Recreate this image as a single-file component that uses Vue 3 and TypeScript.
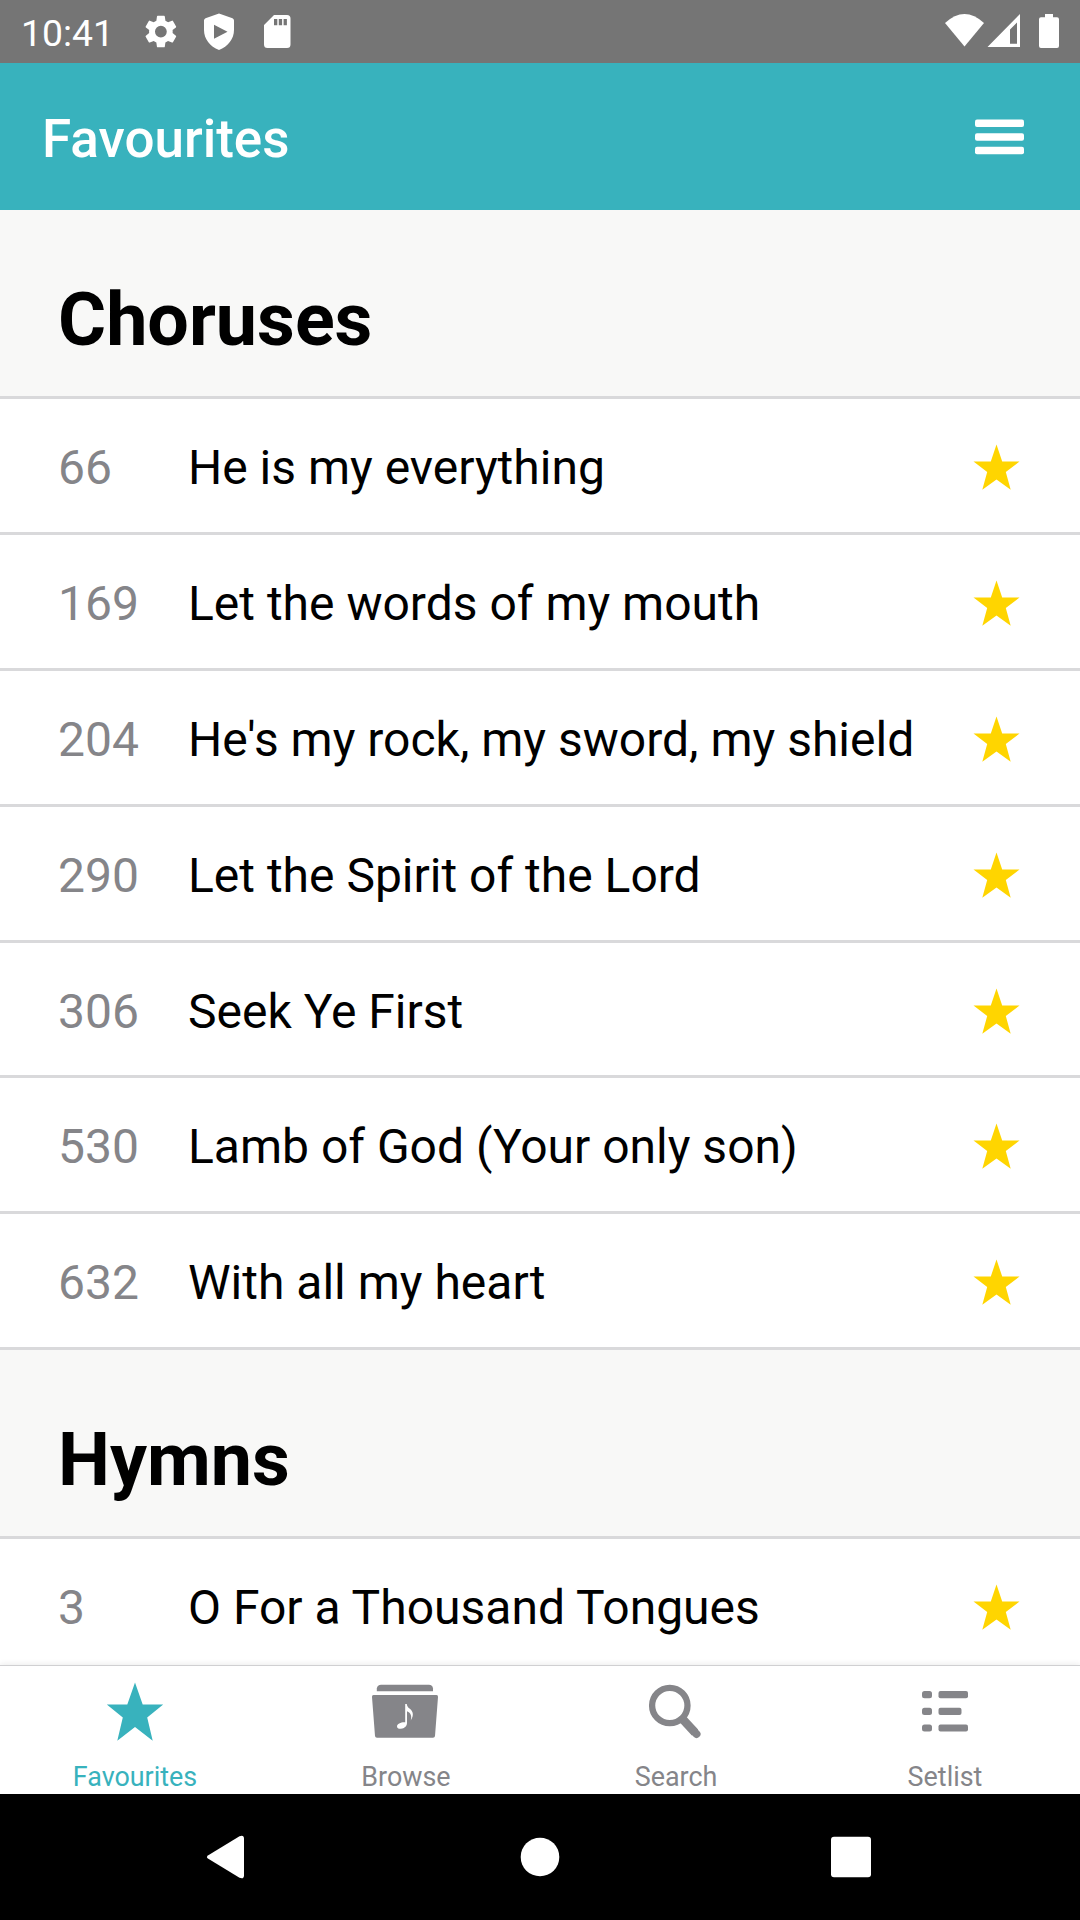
<script setup lang="ts">
interface Song { no: number; title: string }
interface Section { name: string; songs: Song[] }

const sections: Section[] = [
  {
    name: 'Choruses',
    songs: [
      { no: 66, title: 'He is my everything' },
      { no: 169, title: 'Let the words of my mouth' },
      { no: 204, title: "He's my rock, my sword, my shield" },
      { no: 290, title: 'Let the Spirit of the Lord' },
      { no: 306, title: 'Seek Ye First' },
      { no: 530, title: 'Lamb of God (Your only son)' },
      { no: 632, title: 'With all my heart' },
    ],
  },
  { name: 'Hymns', songs: [{ no: 3, title: 'O For a Thousand Tongues' }] },
]
</script>

<template>
  <div class="screen">
    <div class="status">
      <span class="clock">10:41</span>
      <svg class="left-icons" width="160" height="63" viewBox="0 0 160 63" fill="#fff">
        <g transform="translate(1.2 11.9) scale(1.64)">
          <path d="M19.14 12.94c.04-.3.06-.61.06-.94 0-.32-.02-.64-.07-.94l2.03-1.58a.49.49 0 0 0 .12-.61l-1.92-3.32a.49.49 0 0 0-.59-.22l-2.39.96c-.5-.38-1.03-.7-1.62-.94L14.4 2.81a.48.48 0 0 0-.48-.41h-3.84a.47.47 0 0 0-.47.41l-.36 2.54c-.59.24-1.13.57-1.62.94l-2.39-.96a.48.48 0 0 0-.59.22L2.74 8.87c-.12.21-.08.47.12.61l2.03 1.58c-.05.3-.09.63-.09.94s.02.64.07.94l-2.03 1.58a.49.49 0 0 0-.12.61l1.92 3.32c.12.22.37.29.59.22l2.39-.96c.5.38 1.03.7 1.62.94l.36 2.54c.05.24.24.41.48.41h3.84c.24 0 .44-.17.47-.41l.36-2.54c.59-.24 1.13-.56 1.62-.94l2.39.96c.22.08.47 0 .59-.22l1.92-3.32a.48.48 0 0 0-.12-.61l-2.01-1.58zM12 15.6A3.6 3.6 0 1 1 12 8.400a3.600 3.600 0 0 1 0 7.200z" />
        </g>
        <path fill-rule="evenodd" d="M79 13.500 92.500 18.300Q94 19 94 20.500V30C94 39 88 46.500 79 50C70 46.500 64 39 64 30V20.500Q64 19 65.500 18.300zM74 24.800V38.800L87.500 31.800z" />
        <path fill-rule="evenodd" d="M134 15H147Q150.500 15 150.500 18.500V44.500Q150.500 48 147 48H127.500Q124 48 124 44.500V25zM134 19V25.300H137.300V19zM138.800 19V25.300H142.100V19zM143.600 19V25.300H146.900V19z" />
      </svg>
      <svg class="right-icons" width="116" height="63" viewBox="0 0 116 63" fill="#fff">
        <path d="M1 23Q20.500 5 40 23L20.500 46.500z" />
        <path fill-rule="evenodd" d="M76 14V46.900H43.500zM73 22.500 66 29.500V43.800H73z" />
        <path d="M101 14H109V17.300H113Q115 17.300 115 19.300V46Q115 48 113 48H97Q95 48 95 46V19.300Q95 17.300 97 17.300H101z" />
      </svg>
    </div>

    <header class="bar">
      <h1>Favourites</h1>
      <svg width="49" height="36" viewBox="0 0 49 36" fill="#fff">
        <rect y="0.500" width="49" height="7.500" rx="2" />
        <rect y="14.200" width="49" height="7.500" rx="2" />
        <rect y="27.800" width="49" height="7.500" rx="2" />
      </svg>
    </header>

    <main class="list">
      <section v-for="s in sections" :key="s.name">
        <h2>{{ s.name }}</h2>
        <div v-for="song in s.songs" :key="song.no" class="row">
          <span class="no">{{ song.no }}</span>
          <span class="title">{{ song.title }}</span>
          <svg class="star" width="46" height="46" viewBox="0 0 46 46" fill="#ffd500">
            <path d="M23.500 0.400 29.200 17.600H46.500L32.800 28.100 37.700 45.800 23.500 35.400 9.300 45.800 14.200 28.100 0.500 17.600H17.800z" />
          </svg>
        </div>
      </section>
    </main>

    <nav class="tabs">
      <div class="tab active">
        <svg width="72" height="72" viewBox="0 0 72 72" fill="currentColor">
          <path d="M36 8.600 43.700 30.600H64.200L48.200 43.500 53.700 66.800 36 53 18.300 66.800 23.800 43.500 7.800 30.600H28.300z" />
        </svg>
        <span>Favourites</span>
      </div>
      <div class="tab">
        <svg width="72" height="72" viewBox="0 0 72 72" fill="currentColor">
          <path d="M7.800 17.300V14.500Q8.500 10.800 12 10.800H60Q63.500 10.800 64 14.500V17.300z" />
          <path fill-rule="evenodd" d="M4.500 21H67.500Q69.200 21 69 23L66 62Q65.800 63.700 64 63.700H8Q6.200 63.700 6 62L3 23Q2.800 21 4.500 21zM36.200 30V48.300C32 48 28 50 28 52.300C28 54.500 30 55 32 54.800C35.500 54.500 38 52 38 49V37.300C42 39 43 42.500 41.700 46.500C46 40 43 36.500 40.500 34.500C38.500 33 38 31.500 37.800 30z" />
        </svg>
        <span>Browse</span>
      </div>
      <div class="tab">
        <svg width="72" height="72" viewBox="0 0 72 72" fill="none" stroke="currentColor">
          <circle cx="30.800" cy="31.500" r="17.700" stroke-width="6.300" />
          <path d="M43.500 45 56 58.500" stroke-width="8.500" />
          <path d="M55.500 58 57.500 60" stroke-width="8" stroke-linecap="round" />
        </svg>
        <span>Search</span>
      </div>
      <div class="tab last">
        <svg width="72" height="72" viewBox="0 0 72 72" fill="currentColor">
          <rect x="13" y="17" width="10" height="7.200" rx="2.500" />
          <rect x="29.500" y="17" width="29.500" height="7.200" rx="2" />
          <rect x="13" y="33.700" width="10" height="7.200" rx="2.500" />
          <rect x="29.500" y="33.700" width="23" height="7.200" rx="2" />
          <rect x="13" y="50.400" width="10" height="7.200" rx="2.500" />
          <rect x="29.500" y="50.400" width="29.500" height="7.200" rx="2" />
        </svg>
        <span>Setlist</span>
      </div>
    </nav>

    <div class="sysnav">
      <svg width="46" height="46" viewBox="0 0 46 46" fill="#fff"><path d="M2.300 21.200 33.500 2.200Q38 0.500 38 4.800V41.200Q38 45.500 33.500 43.800L2.300 24.800Q-0.500 23 2.300 21.200z" /></svg>
      <svg width="46" height="46" viewBox="0 0 46 46" fill="#fff"><circle cx="23" cy="23" r="19.300" /></svg>
      <svg width="46" height="46" viewBox="0 0 46 46" fill="#fff"><rect x="3" y="2.800" width="40" height="40.500" rx="3" /></svg>
    </div>
  </div>
</template>

<style>
body { margin: 0; }
</style>

<style scoped>
.screen {
  width: 1080px;
  height: 1920px;
  display: flex;
  flex-direction: column;
  overflow: hidden;
  background: #fff;
  font-family: Roboto, sans-serif;
  color: #000;
}
.status {
  flex: none;
  height: 63px;
  display: flex;
  align-items: center;
  background: #757575;
  padding: 0 20px 0 21px;
  box-sizing: border-box;
}
.clock {
  width: 119px;
  color: #fff;
  font-size: 37.3px;
  line-height: 43px;
  padding-top: 3px;
  white-space: nowrap;
}
.right-icons { margin-left: auto; }
.bar {
  flex: none;
  height: 147px;
  box-sizing: border-box;
  padding: 0 56px 0 42px;
  display: flex;
  align-items: center;
  justify-content: space-between;
  background: #38b2bd;
}
h1 {
  margin: 4px 0 0;
  color: #fff;
  font-size: 53px;
  line-height: 62px;
  font-weight: 500;
}
.list { flex: 1; min-height: 0; overflow: hidden; }
h2 {
  margin: 0;
  height: 189px;
  box-sizing: border-box;
  padding: 67px 0 0 58px;
  background: #f8f8f7;
  border-bottom: 3px solid #d9d9db;
  font-size: 73.6px;
  line-height: 86px;
  font-weight: 700;
}
.row {
  height: 136px;
  box-sizing: border-box;
  border-bottom: 3px solid #d9d9db;
  padding: 5px 61px 0 58px;
  display: flex;
  align-items: center;
  font-size: 48px;
  line-height: 56px;
  white-space: nowrap;
}
.row:nth-of-type(5) { height: 135px; }
.no { width: 130px; color: #858589; }
.title { flex: 1; }
.star { margin-bottom: 2px; overflow: visible; }
.tabs {
  flex: none;
  height: 129px;
  box-sizing: border-box;
  border-top: 1px solid #d0d0d2;
  box-shadow: 0 -1px 6px rgba(0, 0, 0, 0.08);
  position: relative;
  background: #fff;
  display: flex;
  color: #858589;
}
.tab {
  flex: 1;
  display: flex;
  flex-direction: column;
  align-items: center;
  padding-top: 8px;
  font-size: 26.9px;
  line-height: 32px;
}
.tab svg { display: block; margin-bottom: 15px; }
.tab span { padding-left: 2px; }
.tab.last span { padding-left: 0; }
.tab.active span { padding-left: 0; }
.active { color: #38b2bd; }
.sysnav {
  flex: none;
  height: 126px;
  background: #000;
  display: flex;
  align-items: center;
  justify-content: center;
  gap: 265px;
}
</style>
